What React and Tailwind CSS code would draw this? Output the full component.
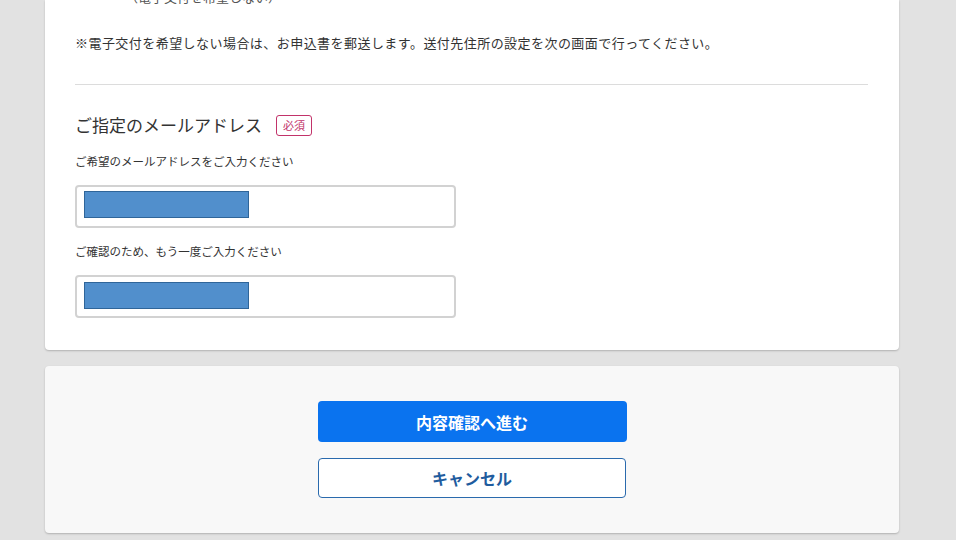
export default function App() {
  const font = { fontFamily: '"Noto Sans CJK JP", "Noto Sans", sans-serif' }

  return (
    <div className="min-h-[540px] bg-[#e2e2e2] pl-[45px] pr-[57px] pb-[8px] text-[#333]" style={font}>
      {/* Main card */}
      <div className="flex flex-col w-[854px] bg-white rounded-b-[4px] shadow-[0_1px_2px_rgba(0,0,0,0.22)] pl-[30px] pr-[31px] pb-[32px]">
        <p className="mt-[-13px] pl-[50px] text-[13px] leading-[20px] text-[#555]">（電子交付を希望しない）</p>

        <p className="mt-[26px] text-[13px] leading-[20px] tracking-[0.45px]">
          ※電子交付を希望しない場合は、お申込書を郵送します。送付先住所の設定を次の画面で行ってください。
        </p>

        <div className="mt-[31px] h-px bg-[#dcdcdc]" />

        <div className="mt-[27px] flex items-center gap-[14px]">
          <h2 className="text-[17px] leading-[26px] font-normal text-[#333]">ご指定のメールアドレス</h2>
          <span className="flex h-[21px] w-[36px] items-center justify-center rounded-[3px] border border-[#c2336a] text-[11px] text-[#c2336a] bg-white">
            必須
          </span>
        </div>

        <label className="mt-[14px] text-[11.5px] leading-[18px]">ご希望のメールアドレスをご入力ください</label>
        <div className="mt-[15px] h-[43px] w-[381px] rounded-[4px] border-2 border-[#d2d2d2] bg-white pl-[7px] pt-[4px] box-border">
          <div className="h-[27px] w-[165px] bg-[#518fcc] border border-[#2f6599]" />
        </div>

        <label className="mt-[14px] text-[11.5px] leading-[18px]">ご確認のため、もう一度ご入力ください</label>
        <div className="mt-[15px] h-[43px] w-[381px] rounded-[4px] border-2 border-[#d2d2d2] bg-white pl-[7px] pt-[5px] box-border">
          <div className="h-[27px] w-[165px] bg-[#518fcc] border border-[#2f6599]" />
        </div>
      </div>

      {/* Action card */}
      <div className="mt-[16px] flex w-[854px] flex-col items-center gap-[16px] rounded-[4px] bg-[#f8f8f8] pt-[35px] pb-[35px] shadow-[0_1px_2px_rgba(0,0,0,0.22)]">
        <button className="h-[41px] w-[309px] rounded-[4px] bg-[#0a73ef] text-[16px] font-bold text-white">
          内容確認へ進む
        </button>
        <button className="h-[40px] w-[308px] rounded-[4px] border border-[#2a6aad] bg-white text-[16px] font-bold text-[#1f5c9e]">
          キャンセル
        </button>
      </div>
    </div>
  )
}
